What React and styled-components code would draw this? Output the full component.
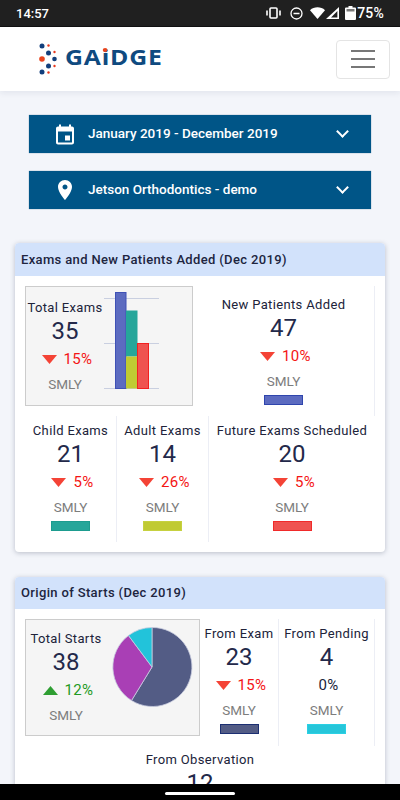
import React from "react";
import styled, { createGlobalStyle } from "styled-components";

const topMetrics = [{ title: "New Patients Added", value: 47, change: 10, bar: "blue" }];
const examMetrics = [
  { title: "Child Exams", value: 21, change: 5, bar: "teal", width: "92px" },
  { title: "Adult Exams", value: 14, change: 26, bar: "lime", width: "92px" },
  { title: "Future Exams Scheduled", value: 20, change: 5, bar: "red", width: "166px" },
];
const barColors = {
  blue: ["#5c6bc0", "#2f45ad"],
  teal: ["#26a69a", "#1d9c8f"],
  lime: ["#c0ca33", "#c6d140"],
  red: ["#ef5350", "#f02a2a"],
  navy: ["#535c85", "#1c2f72"],
  cyan: ["#26c6da", "#2bd0e4"],
};

const App = () => {
  return (
    <Page>
      <GlobalStyle />
      <StatusBar>
        <Time>14:57</Time>
        <StatusIcons>
          <svg width="15" height="12" viewBox="0 0 15 12" fill="none" stroke="#fff">
            <rect x="4" y="1" width="7" height="10" rx="1" strokeWidth="1.6" />
            <path d="M1 3.5v5M14 3.5v5" strokeWidth="1.6" />
          </svg>
          <StatusIcon as="svg" $gap="9px" width="13" height="13" viewBox="0 0 13 13" fill="none" stroke="#fff">
            <circle cx="6.5" cy="6.5" r="5.5" strokeWidth="1.3" />
            <path d="M3.5 6.5h6" strokeWidth="1.5" />
          </StatusIcon>
          <StatusIcon as="svg" $gap="7px" width="15" height="12" viewBox="0 0 15 12" fill="#fff">
            <path d="M0 3.2C4-.6 11-.6 15 3.2L7.5 12z" />
          </StatusIcon>
          <StatusIcon as="svg" $gap="1px" width="13" height="12" viewBox="0 0 13 12">
            <path d="M13 0v12H0z" fill="#fff" />
            <path d="M11.4 4v6.4H5z" fill="#202020" />
          </StatusIcon>
          <StatusIcon as="svg" $gap="6px" width="11" height="14" viewBox="0 0 11 14" fill="#fff">
            <path d="M3.5 0h4v1.5H10a1 1 0 0 1 1 1V13a1 1 0 0 1-1 1H1a1 1 0 0 1-1-1V2.500a1 1 0 0 1 1-1h2.500z" />
            <path d="M1.500 3h8v2.500h-8z" fill="#7b7b7b" />
          </StatusIcon>
          <Battery>75%</Battery>
        </StatusIcons>
      </StatusBar>

      <NavBar>
        <Logo>
          <svg width="20" height="34" viewBox="0 0 20 34">
            <circle cx="4" cy="4" r="2.500" fill="#123f7c" />
            <circle cx="10.500" cy="3.500" r="1.200" fill="#e8391d" />
            <circle cx="10.500" cy="11" r="2.500" fill="#123f7c" />
            <circle cx="16.500" cy="10" r="1.200" fill="#e8391d" />
            <circle cx="4" cy="17" r="2.800" fill="#e8441d" />
            <circle cx="16.500" cy="17" r="2.300" fill="#123f7c" />
            <circle cx="10.500" cy="24" r="2.500" fill="#123f7c" />
            <circle cx="16.500" cy="24" r="1.200" fill="#e8391d" />
            <circle cx="4" cy="30" r="2.500" fill="#123f7c" />
            <circle cx="10.500" cy="30.500" r="1.200" fill="#e8391d" />
          </svg>
          <LogoText>GA<LogoI>i</LogoI>DGE</LogoText>
        </Logo>
        <MenuButton aria-label="Menu">
          <MenuLine />
          <MenuLine />
          <MenuLine />
        </MenuButton>
      </NavBar>

      <Filters>
        <FilterButton>
          <svg width="24" height="24" viewBox="0 -1.500 24 24" fill="#fff">
            <path d="M17 12h-5v5h5v-5zM16 1v2H8V1H6v2H5c-1.110 0-1.990.9-1.990 2L3 19c0 1.100.89 2 2 2h14c1.100 0 2-.9 2-2V5c0-1.100-.9-2-2-2h-1V1h-2zm3 18H5V8h14v11z" />
          </svg>
          <FilterLabel>January 2019 - December 2019</FilterLabel>
          <Chevron />
        </FilterButton>
        <FilterButton>
          <svg width="24" height="24" viewBox="0 0 24 24" fill="#fff">
            <path d="M12 2C8.130 2 5 5.130 5 9c0 5.250 7 13 7 13s7-7.750 7-13c0-3.870-3.130-7-7-7zm0 9.500c-1.380 0-2.500-1.120-2.500-2.500s1.120-2.500 2.500-2.500 2.500 1.120 2.500 2.500-1.120 2.500-2.500 2.500z" />
          </svg>
          <FilterLabel>Jetson Orthodontics - demo</FilterLabel>
          <Chevron />
        </FilterButton>
      </Filters>

      <Cards>
        <Card>
          <CardHeader $height="33px">Exams and New Patients Added (Dec 2019)</CardHeader>
          <CardBody>
            <Row $height="130px">
              <SummaryBox $width="168px" $height="120px">
                <SummaryColumn $width="78px">
                  <Metric title="Total Exams" value={35} change={15} top="11px" />
                </SummaryColumn>
                <StackedBars />
              </SummaryBox>
              {topMetrics.map((m) => (
                <Cell key={m.title} $width="182px" $divider>
                  <Metric {...m} top="9px" />
                </Cell>
              ))}
            </Row>
            <Row $height="126px">
              {examMetrics.map((m, i) => (
                <Cell key={m.title} $width={m.width} $divider={i < 2}>
                  <Metric {...m} top="5px" />
                </Cell>
              ))}
            </Row>
          </CardBody>
        </Card>

        <Card>
          <CardHeader $height="32px">Origin of Starts (Dec 2019)</CardHeader>
          <CardBody>
            <Row $height="127px">
              <SummaryBox $width="175px" $height="117px">
                <SummaryColumn $width="80px">
                  <Metric title="Total Starts" value={38} change={12} up top="9px" />
                </SummaryColumn>
                <StartsPie />
              </SummaryBox>
              <Cell $width="79px" $divider>
                <Metric title="From Exam" value={23} change={15} bar="navy" top="5px" />
              </Cell>
              <Cell $width="96px" $divider>
                <Metric title="From Pending" value={4} change={0} bar="cyan" top="5px" />
              </Cell>
            </Row>
            <Row $height="127px">
              <Cell $width="100%">
                <Metric title="From Observation" value={12} top="4px" />
              </Cell>
            </Row>
          </CardBody>
        </Card>
      </Cards>

      <GestureBar>
        <GesturePill />
      </GestureBar>
    </Page>
  );
};

export default App;

const Metric = ({ title, value, change, up, bar, top }) => {
  return (
    <MetricBlock $top={top}>
      <MetricTitle>{title}</MetricTitle>
      <MetricValue>{value}</MetricValue>
      {change !== undefined && (
        <Change $tone={change === 0 ? "flat" : up ? "up" : "down"}>
          {change !== 0 && (
            <Arrow $up={up} width="15" height="9" viewBox="0 0 15 9">
              <path d="M0 0h15L7.500 9z" fill={up ? "#2e9e32" : "#f44336"} />
            </Arrow>
          )}
          {change}%
        </Change>
      )}
      {change !== undefined && <Smly>SMLY</Smly>}
      {bar && <Swatch $fill={barColors[bar][0]} $edge={barColors[bar][1]} />}
    </MetricBlock>
  );
};

const StackedBars = () => (
  <ChartSvg width="56" height="98" viewBox="0 0 56 98">
    <path d="M0 6.500h55M0 51.500h55M0 96.500h55" stroke="#c9cfe0" strokeWidth="1" />
    <rect x="11.500" y="0.500" width="10.500" height="96" fill="#5c6bc0" stroke="#3f51b5" />
    <rect x="22" y="18.500" width="11.500" height="46" fill="#26a69a" />
    <rect x="22" y="64.500" width="11.500" height="32" fill="#c0ca33" />
    <rect x="33.500" y="51.500" width="11" height="45" fill="#ef5350" stroke="#f32020" />
  </ChartSvg>
);

const StartsPie = () => (
  <PieSvg width="82" height="82" viewBox="-41 -41 82 82">
    <path d="M0 0V-39.500A39.500 39.500 0 1 1 -20.500 33.500Z" fill="#535c85" stroke="#c9cde0" strokeWidth="0.8" />
    <path d="M0 0L-20.500 33.500A39.500 39.500 0 0 1 -23.500 -31.500Z" fill="#a93fb5" stroke="#c9cde0" strokeWidth="0.8" />
    <path d="M0 0L-23.500 -31.500A39.500 39.500 0 0 1 0 -39.500Z" fill="#22c3da" stroke="#c9cde0" strokeWidth="0.8" />
  </PieSvg>
);

const GlobalStyle = createGlobalStyle`
  html, body {
    margin: 0;
    padding: 0;
    background: #f3f5fa;
    font-family: Roboto, "Liberation Sans", sans-serif;
  }
`;

const Page = styled.div`
  position: relative;
  width: 400px;
  height: 800px;
  overflow: hidden;
  background: #f3f5fa;
`;

const StatusBar = styled.div`
  display: flex;
  align-items: center;
  justify-content: space-between;
  box-sizing: border-box;
  height: 27px;
  padding: 0 16px;
  background: #202020;
  border-bottom: 1px solid #111;
  color: #fff;
`;

const Time = styled.span`
  font-size: 13px;
  font-weight: 500;
`;

const StatusIcons = styled.div`
  display: flex;
  align-items: center;
`;

const StatusIcon = styled.svg`
  margin-left: ${(p) => p.$gap};
`;

const Battery = styled.span`
  margin-left: 1px;
  font-size: 14px;
  font-weight: 500;
  letter-spacing: 0.2px;
`;

const NavBar = styled.div`
  display: flex;
  align-items: center;
  justify-content: space-between;
  height: 64px;
  padding: 0 10px 0 38px;
  background: #fff;
  box-shadow: 0 2px 6px rgba(30, 40, 80, 0.08);
`;

const Logo = styled.div`
  display: flex;
  align-items: center;
  gap: 7px;
`;

const LogoText = styled.span`
  position: relative;
  top: -2px;
  font-family: "Open Sans", sans-serif;
  font-size: 21px;
  font-weight: 700;
  letter-spacing: 0.7px;
  color: #0f4a80;
  transform: scaleX(1.18);
  transform-origin: left center;
`;

const LogoI = styled.span`
  position: relative;
  &::after {
    content: "";
    position: absolute;
    left: 1px;
    top: 5px;
    width: 4px;
    height: 4px;
    background: #e8441d;
    border-radius: 50%;
  }
`;

const MenuButton = styled.button`
  display: flex;
  flex-direction: column;
  align-items: center;
  justify-content: center;
  gap: 6px;
  width: 54px;
  height: 39px;
  padding: 0;
  background: #fff;
  border: 1px solid #e4e4e4;
  border-radius: 4px;
`;

const MenuLine = styled.span`
  width: 24px;
  height: 2px;
  background: #777;
`;

const Filters = styled.div`
  display: flex;
  flex-direction: column;
  gap: 18px;
  padding: 24px 29px 0;
`;

const FilterButton = styled.div`
  display: flex;
  align-items: center;
  gap: 11px;
  height: 38px;
  padding: 0 22px 0 24px;
  background: #005587;
  color: #fff;
  box-shadow: 0 0 1px rgba(0, 60, 110, 0.6);
`;

const FilterLabel = styled.span`
  flex: 1;
  padding-bottom: 2px;
  font-size: 13.5px;
  font-weight: 500;
`;

const Chevron = styled.span`
  width: 7px;
  height: 7px;
  margin: -5px 2px 0 0;
  border-right: 2px solid #fff;
  border-bottom: 2px solid #fff;
  transform: rotate(45deg);
`;

const Cards = styled.div`
  display: flex;
  flex-direction: column;
  gap: 25px;
  padding: 34px 15px 0;
`;

const Card = styled.section`
  flex-shrink: 0;
  background: #fff;
  border-radius: 4px;
  box-shadow: 0 1px 5px rgba(40, 50, 80, 0.28);
  overflow: hidden;
`;

const CardHeader = styled.h2`
  margin: 0;
  height: ${(p) => p.$height};
  padding-left: 6px;
  background: #d2e2fb;
  color: #20253f;
  font-size: 13px;
  font-weight: 500;
  letter-spacing: 0.35px;
  line-height: ${(p) => p.$height};
`;

const CardBody = styled.div`
  padding: 10px;
`;

const Row = styled.div`
  display: flex;
  height: ${(p) => p.$height};
`;

const SummaryBox = styled.div`
  display: flex;
  flex-shrink: 0;
  box-sizing: border-box;
  width: ${(p) => p.$width};
  height: ${(p) => p.$height};
  background: #f5f5f5;
  border: 1px solid #ccc;
`;

const SummaryColumn = styled.div`
  flex-shrink: 0;
  width: ${(p) => p.$width};
  text-align: center;
`;

const ChartSvg = styled.svg`
  margin-top: 5px;
`;

const PieSvg = styled.svg`
  margin: 6px 0 0 5px;
`;

const Cell = styled.div`
  flex-shrink: 0;
  box-sizing: border-box;
  width: ${(p) => p.$width};
  border-right: ${(p) => (p.$divider ? "1px solid #eceef5" : "none")};
  text-align: center;
`;

const MetricBlock = styled.div`
  display: flex;
  flex-direction: column;
  align-items: center;
  padding-top: ${(p) => p.$top};
`;

const MetricTitle = styled.div`
  height: 20px;
  color: #20233a;
  font-size: 13px;
  letter-spacing: 0.35px;
  line-height: 20px;
  white-space: nowrap;
`;

const MetricValue = styled.div`
  height: 26px;
  color: #23294a;
  font-size: 24px;
  line-height: 26px;
`;

const Change = styled.div`
  display: flex;
  align-items: center;
  gap: 7px;
  height: 26px;
  margin: 2px 0 0 4px;
  color: ${(p) => (p.$tone === "up" ? "#1f9a24" : p.$tone === "flat" ? "#20233a" : "#f41414")};
  font-size: 15px;
  letter-spacing: 0.3px;
  line-height: 26px;
`;

const Arrow = styled.svg`
  transform: ${(p) => (p.$up ? "rotate(180deg)" : "none")};
`;

const Smly = styled.div`
  height: 24px;
  color: #7d7d7d;
  font-size: 13.5px;
  line-height: 24px;
`;

const Swatch = styled.div`
  box-sizing: border-box;
  width: 39px;
  height: 10px;
  margin-top: 2px;
  background: ${(p) => p.$fill};
  border: 1px solid ${(p) => p.$edge};
`;

const GestureBar = styled.div`
  position: absolute;
  left: 0;
  right: 0;
  bottom: 0;
  display: flex;
  justify-content: center;
  height: 16px;
  background: #000;
`;

const GesturePill = styled.div`
  width: 70px;
  height: 2.500px;
  margin-top: 8px;
  background: #fff;
  border-radius: 2px;
`;
